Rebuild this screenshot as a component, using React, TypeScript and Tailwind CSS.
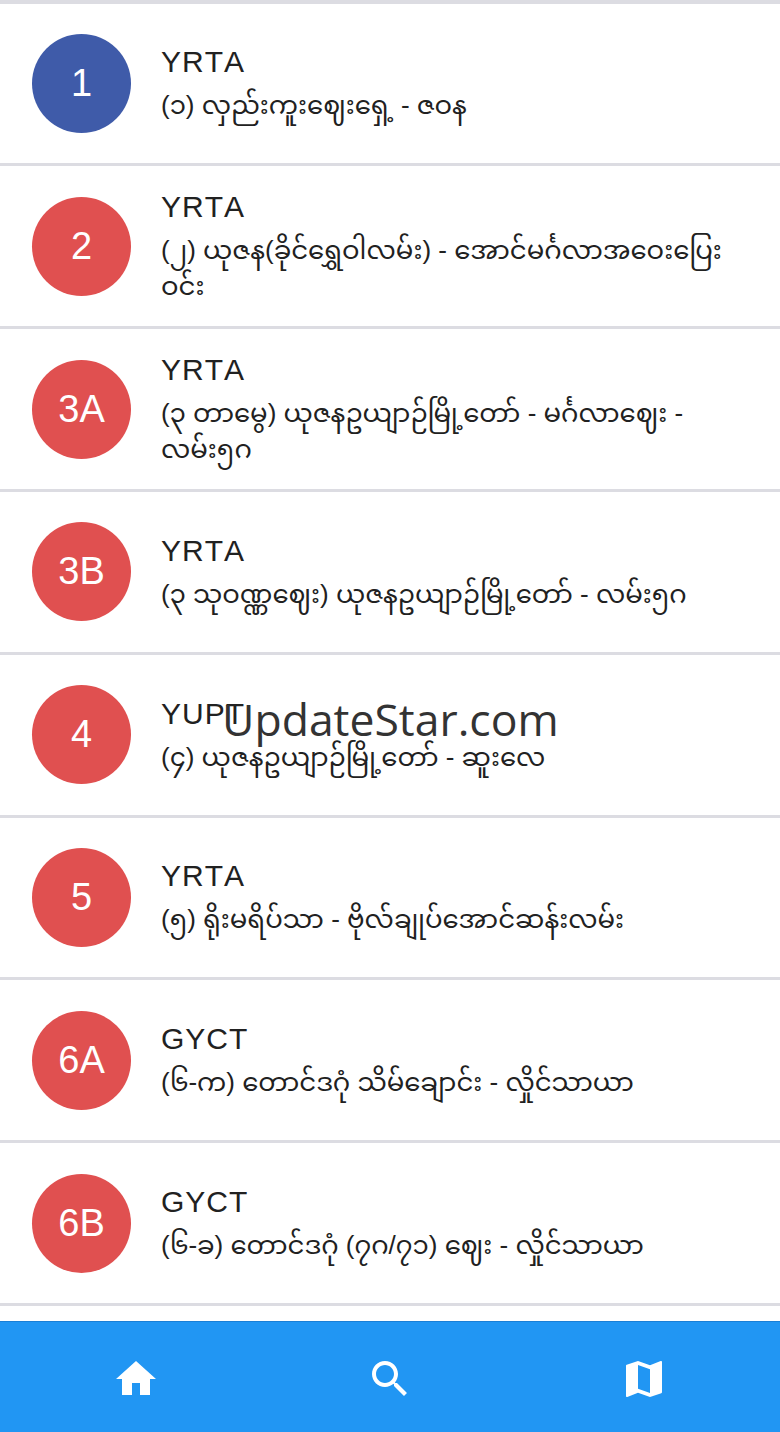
const routes = [
  { no: '1', title: 'YRTA', text: '(၁) လှည်းကူးဈေးရှေ့ - ဇဝန', active: true },
  { no: '2', title: 'YRTA', text: '(၂) ယုဇန(ခိုင်ရွှေဝါလမ်း) - အောင်မင်္ဂလာအဝေးပြေးဝင်း' },
  { no: '3A', title: 'YRTA', text: '(၃ တာမွေ) ယုဇနဥယျာဉ်မြို့တော် - မင်္ဂလာဈေး - လမ်း၅ဂ' },
  { no: '3B', title: 'YRTA', text: '(၃ သုဝဏ္ဏဈေး) ယုဇနဥယျာဉ်မြို့တော် - လမ်း၅ဂ' },
  { no: '4', title: 'YUPT', text: '(၄) ယုဇနဥယျာဉ်မြို့တော် - ဆူးလေ' },
  { no: '5', title: 'YRTA', text: '(၅) ရိုးမရိပ်သာ - ဗိုလ်ချုပ်အောင်ဆန်းလမ်း' },
  { no: '6A', title: 'GYCT', text: '(၆-က) တောင်ဒဂုံ သိမ်ချောင်း - လှိုင်သာယာ' },
  { no: '6B', title: 'GYCT', text: '(၆-ခ) တောင်ဒဂုံ (၇ဂ/၇၁) ဈေး - လှိုင်သာယာ' },
];

const NavIcon = ({ d }: { d: string }) => (
  <div className="flex-1 flex justify-center">
    <svg width="48" height="48" viewBox="0 0 24 24" fill="#ffffff">
      <path d={d} />
    </svg>
  </div>
);

export default function App() {
  return (
    <div className="relative w-[780px] h-[1432px] overflow-hidden bg-white font-['Liberation_Sans','Noto_Sans_Myanmar','Noto_Sans',sans-serif]">
      <div className="h-[3.6px] bg-[#dcdce2]" />

      {/* Route list */}
      {routes.map((r) => (
        <div
          key={r.no}
          className="h-[162.8px] border-b-[3.5px] border-[#dcdce2] last:border-[#cbcbd0] flex items-center pl-[32px] pr-[40px]"
        >
          <div
            className={`w-[99px] h-[99px] rounded-full shrink-0 flex items-center justify-center text-white text-[38px] ${
              r.active ? 'bg-[#3f5ba9]' : 'bg-[#e05050]'
            }`}
          >
            {r.no}
          </div>
          <div className="ml-[30px] min-w-0">
            <div className="text-[30px] leading-[38px] tracking-[1px] [font-kerning:none] text-[#212121]">{r.title}</div>
            <div className="mt-[6px] text-[26px] leading-[36px] text-[#212121]">{r.text}</div>
          </div>
        </div>
      ))}

      {/* Watermark */}
      <div className="absolute left-[222px] top-[689px] text-[44.5px] leading-[60px] text-[#333333] font-['Open_Sans',sans-serif]">
        UpdateStar.com
      </div>

      {/* Bottom nav */}
      <div className="absolute left-0 right-0 bottom-0 h-[111px] bg-[#2196f3] border-t border-[#1a7fd6] flex items-center px-[9px] pt-[3px]">
        <NavIcon d="M10 20v-6h4v6h5v-8h3L12 3 2 12h3v8z" />
        <NavIcon d="M15.5 14h-.79l-.28-.27C15.41 12.59 16 11.11 16 9.5 16 5.91 13.09 3 9.5 3S3 5.91 3 9.5 5.91 16 9.5 16c1.61 0 3.09-.59 4.23-1.57l.27.28v.79l5 4.99L20.49 19l-4.99-5zm-6 0C7.01 14 5 11.99 5 9.5S7.01 5 9.5 5 14 7.01 14 9.5 11.99 14 9.5 14z" />
        <NavIcon d="M20.5 3l-.16.03L15 5.1 9 3 3.36 4.9c-.21.07-.36.25-.36.48V20.5c0 .28.22.5.5.5l.16-.03L9 18.9l6 2.1 5.64-1.9c.21-.07.36-.25.36-.48V3.5c0-.28-.22-.5-.5-.5zM15 19l-6-2.11V5l6 2.11V19z" />
      </div>
    </div>
  );
}
